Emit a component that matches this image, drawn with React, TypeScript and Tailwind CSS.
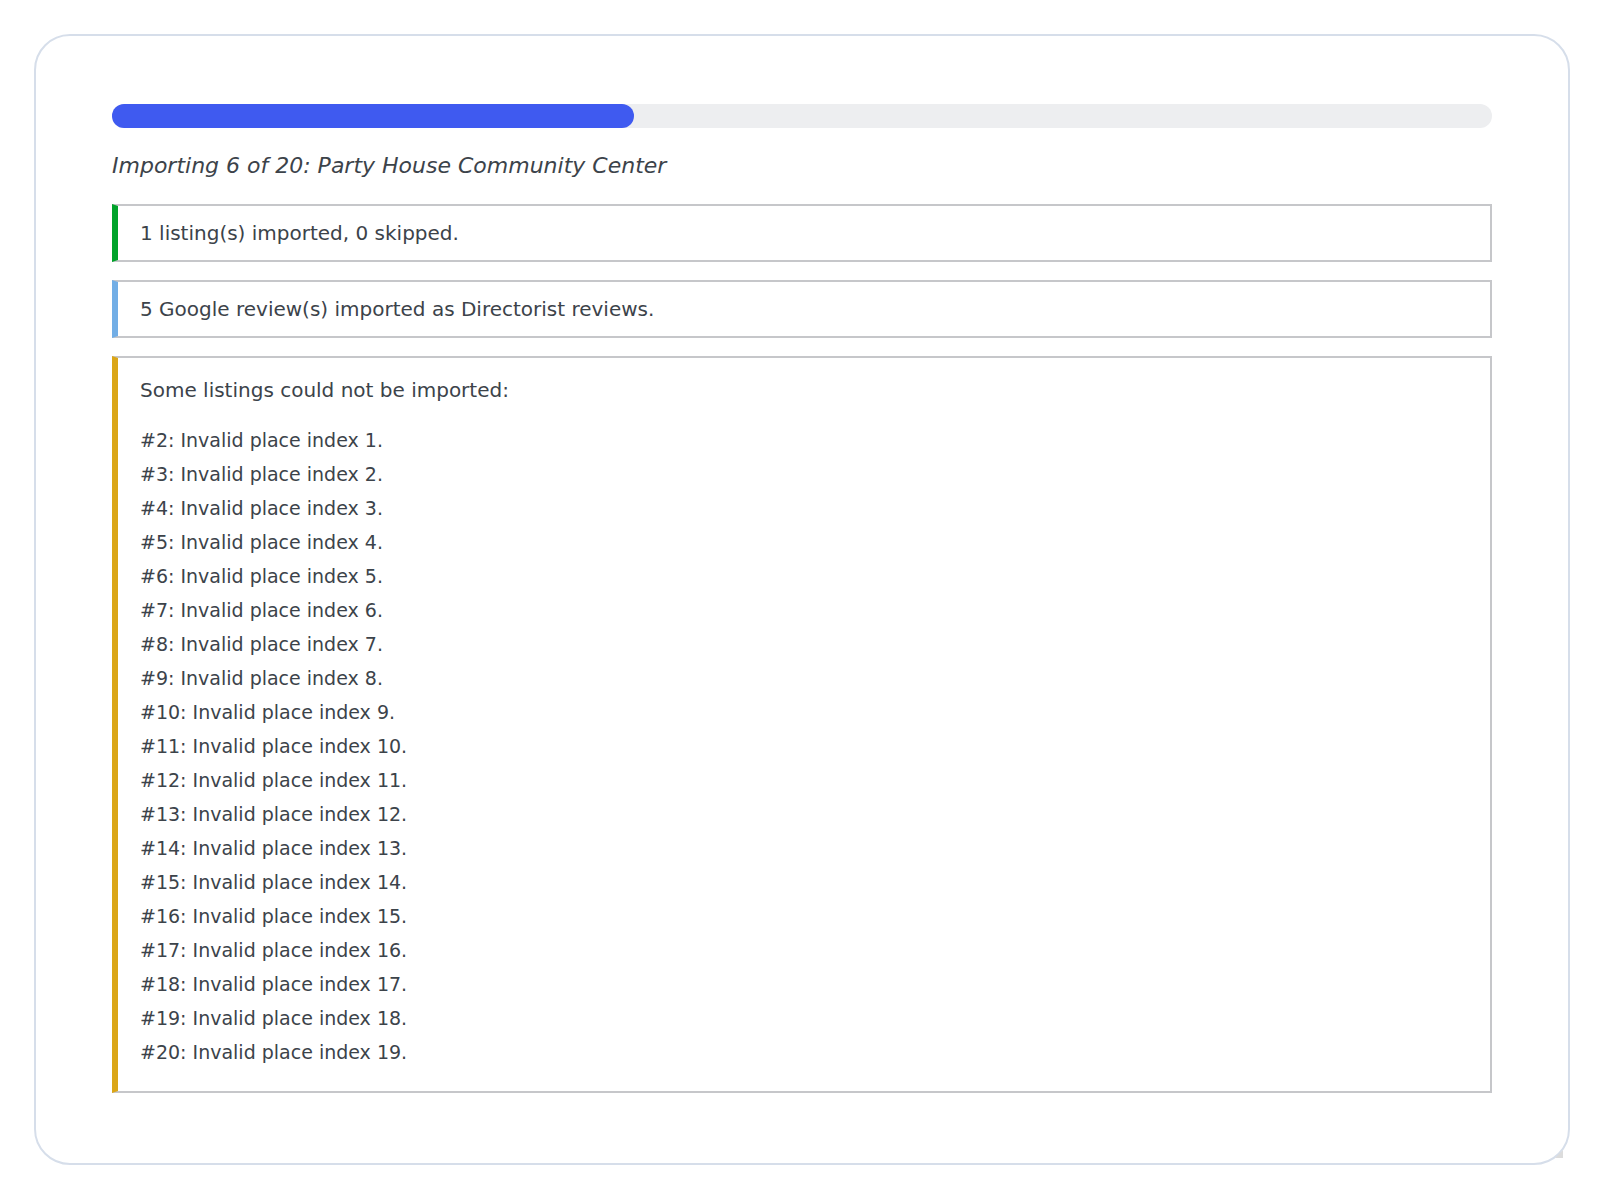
import React from 'react';

interface Notice {
  text: string;
  accent: string;
}

const notices: Notice[] = [
  { text: '1 listing(s) imported, 0 skipped.', accent: 'border-l-[#00a32a]' },
  { text: '5 Google review(s) imported as Directorist reviews.', accent: 'border-l-[#72aee6]' },
];

// listing #2..#20 failed, each one index behind
const errors = Array.from({ length: 19 }, (_, i) => `#${i + 2}: Invalid place index ${i + 1}.`);

const ProgressBar: React.FC<{ percent: number }> = ({ percent }) => (
  <div className="h-6 w-full rounded-full bg-[#edeef0]">
    <div className="h-6 rounded-full bg-[#3f5af0]" style={{ width: `${percent}%` }} />
  </div>
);

const App: React.FC = () => {
  return (
    <div className="h-screen w-full bg-white p-[34px] text-[#3c434a]" style={{ fontFamily: '"DejaVu Sans", Verdana, sans-serif' }}>
      <div className="relative h-full rounded-[36px] border-2 border-[#d6deea] bg-white px-[76px] pt-[68px]">
        <ProgressBar percent={37.8} />

        <p className="mt-[21px] text-[22px] italic leading-[33px]">
          Importing 6 of 20: Party House Community Center
        </p>

        <div className="mt-[22px] flex flex-col gap-[18px]">
          {notices.map(n => (
            <div
              key={n.text}
              className={`border-2 border-l-[6px] border-[#c6c7ca] ${n.accent} bg-white py-3 pl-[22px] text-[20px] leading-[30px]`}
            >
              {n.text}
            </div>
          ))}

          <div className="border-2 border-l-[6px] border-[#c6c7ca] border-l-[#dba617] bg-white pb-[22px] pl-[22px] pt-[17px]">
            <p className="text-[20px] leading-[30px]">Some listings could not be imported:</p>
            <ul className="mt-[18px] text-[19px] leading-[34px]">
              {errors.map(e => (
                <li key={e}>{e}</li>
              ))}
            </ul>
          </div>
        </div>

        {/* resize grip in the corner */}
        <svg className="absolute bottom-[5px] right-[5px] h-[8px] w-[8px]" viewBox="0 0 8 8">
          <polygon points="8,0 8,8 0,8" fill="#dcdcdc" />
        </svg>
      </div>
    </div>
  );
};

export default App;
